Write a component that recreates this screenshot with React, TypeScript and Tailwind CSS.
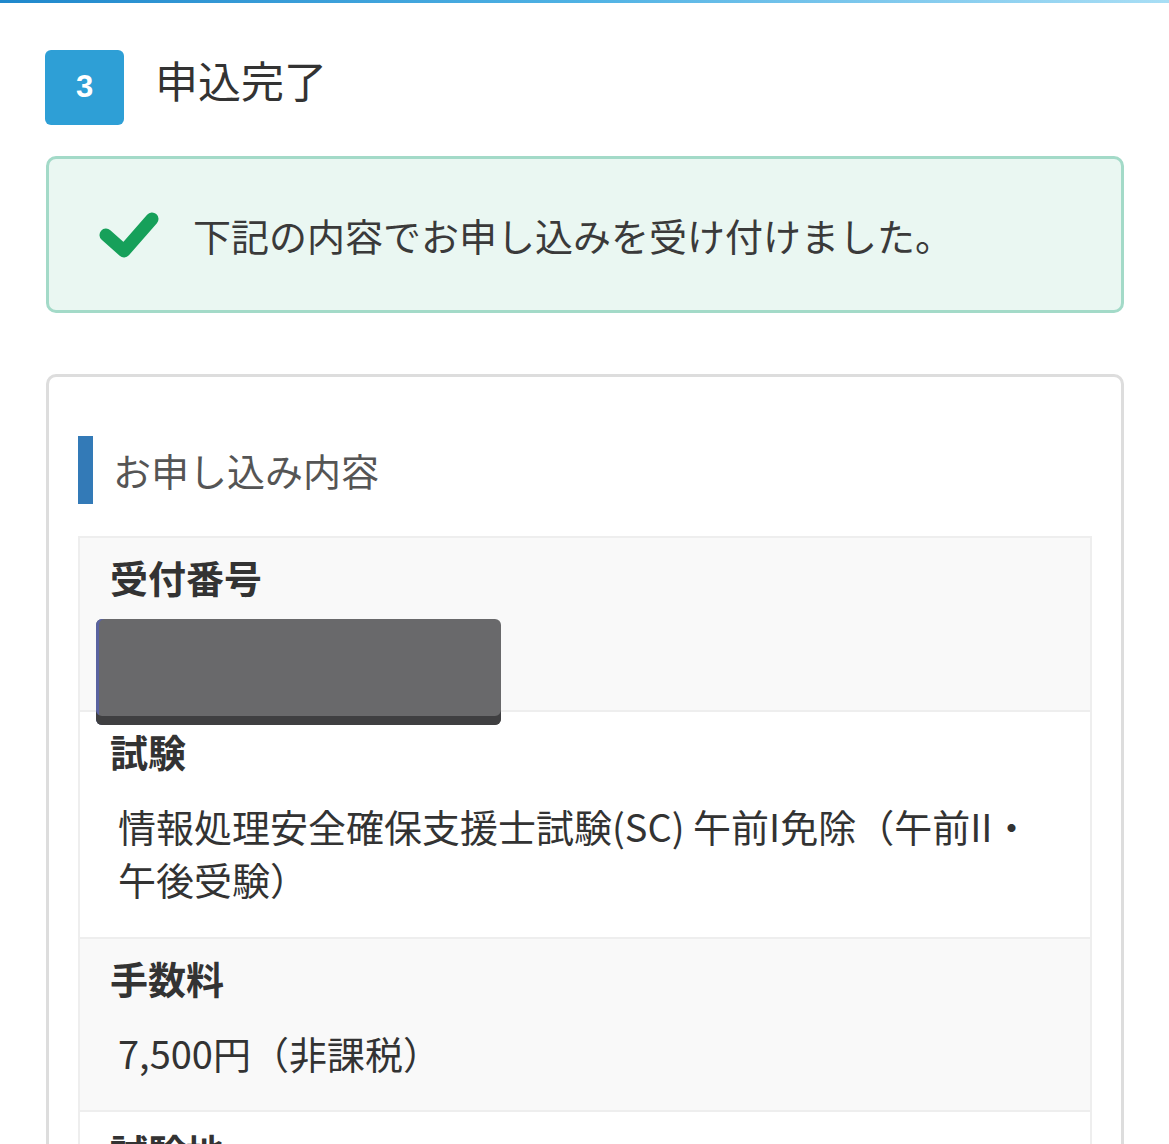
import React from "react";

const jp = { fontFamily: '"Noto Sans CJK JP", "Noto Sans", sans-serif' };

export default function App() {
  return (
    <div className="w-[1169px] h-[1144px] overflow-hidden bg-white text-[#333]" style={jp}>
      <div className="h-[3px] w-full bg-gradient-to-r from-[#1f88cc] via-[#4fb2e4] to-[#a8def5]" />
      <div className="px-[45px]">
        {/* Step header */}
        <div className="mt-[47px] flex items-start gap-[31px]">
          <div className="flex h-[75px] w-[79px] items-center justify-center rounded-[6px] bg-[#2e9fd6] text-[31px] font-bold text-white" style={{ fontFamily: '"Liberation Sans", Arial, sans-serif' }}>
            3
          </div>
          <div className="mt-[4px] text-[43px] leading-[50px] text-[#333]">申込完了</div>
        </div>

        {/* Success alert */}
        <div className="mt-[31px] ml-[1px] flex h-[157px] w-[1078px] items-center rounded-[10px] border-[3px] border-[#a3dac8] bg-[#eaf7f2] pl-[49px]">
          <svg width="61" height="47" viewBox="0 0 61 47" className="shrink-0">
            <polyline points="8,24 26,40 54,8" fill="none" stroke="#16a05a" strokeWidth="13" strokeLinecap="round" strokeLinejoin="round" />
          </svg>
          <div className="ml-[34px] text-[38px] leading-[48px] text-[#3a3a3a]">下記の内容でお申し込みを受け付けました。</div>
        </div>

        {/* Card */}
        <div className="mt-[61px] ml-[1px] w-[1078px] rounded-t-[10px] border-[3px] border-b-0 border-[#dddddd] px-[29px] pt-[59px]">
          <div className="flex h-[68px] items-center border-l-[15px] border-[#337ab7] pl-[20px] text-[38px] leading-[48px] text-[#555]">
            お申し込み内容
          </div>

          <div className="mt-[32px] border-2 border-b-0 border-[#eeeeee]">
            {/* Row 1 */}
            <div className="bg-[#f9f9f9] pt-[19px]">
              <div className="pl-[30px] text-[38px] font-bold leading-[40px] text-[#333]">受付番号</div>
              <div className="relative z-10 mt-[22px] mb-[-15px] ml-[16px] h-[106px] w-[405px] rounded-[6px] bg-[#69696b] shadow-[inset_0_-9px_0_#3f3f41,inset_3px_0_0_#5a63a0]" />
            </div>
            {/* Row 2 */}
            <div className="border-t-2 border-[#eeeeee] bg-white pt-[19px] pb-[32px]">
              <div className="pl-[30px] text-[38px] font-bold leading-[40px] text-[#333]">試験</div>
              <div className="mt-[28px] pl-[38px] pr-[30px] text-[38px] leading-[53px] text-[#333]">
                情報処理安全確保支援士試験(SC) 午前I免除（午前II・午後受験）
              </div>
            </div>
            {/* Row 3 */}
            <div className="border-t-2 border-[#eeeeee] bg-[#f9f9f9] pt-[19px] pb-[31px]">
              <div className="pl-[30px] text-[38px] font-bold leading-[40px] text-[#333]">手数料</div>
              <div className="mt-[28px] pl-[38px] text-[38px] leading-[53px] text-[#333]">7,500円（非課税）</div>
            </div>
            {/* Row 4 */}
            <div className="border-t-2 border-[#eeeeee] bg-white pt-[19px] pb-[40px]">
              <div className="pl-[30px] text-[38px] font-bold leading-[40px] text-[#333]">試験地</div>
            </div>
          </div>
        </div>
      </div>
    </div>
  );
}
